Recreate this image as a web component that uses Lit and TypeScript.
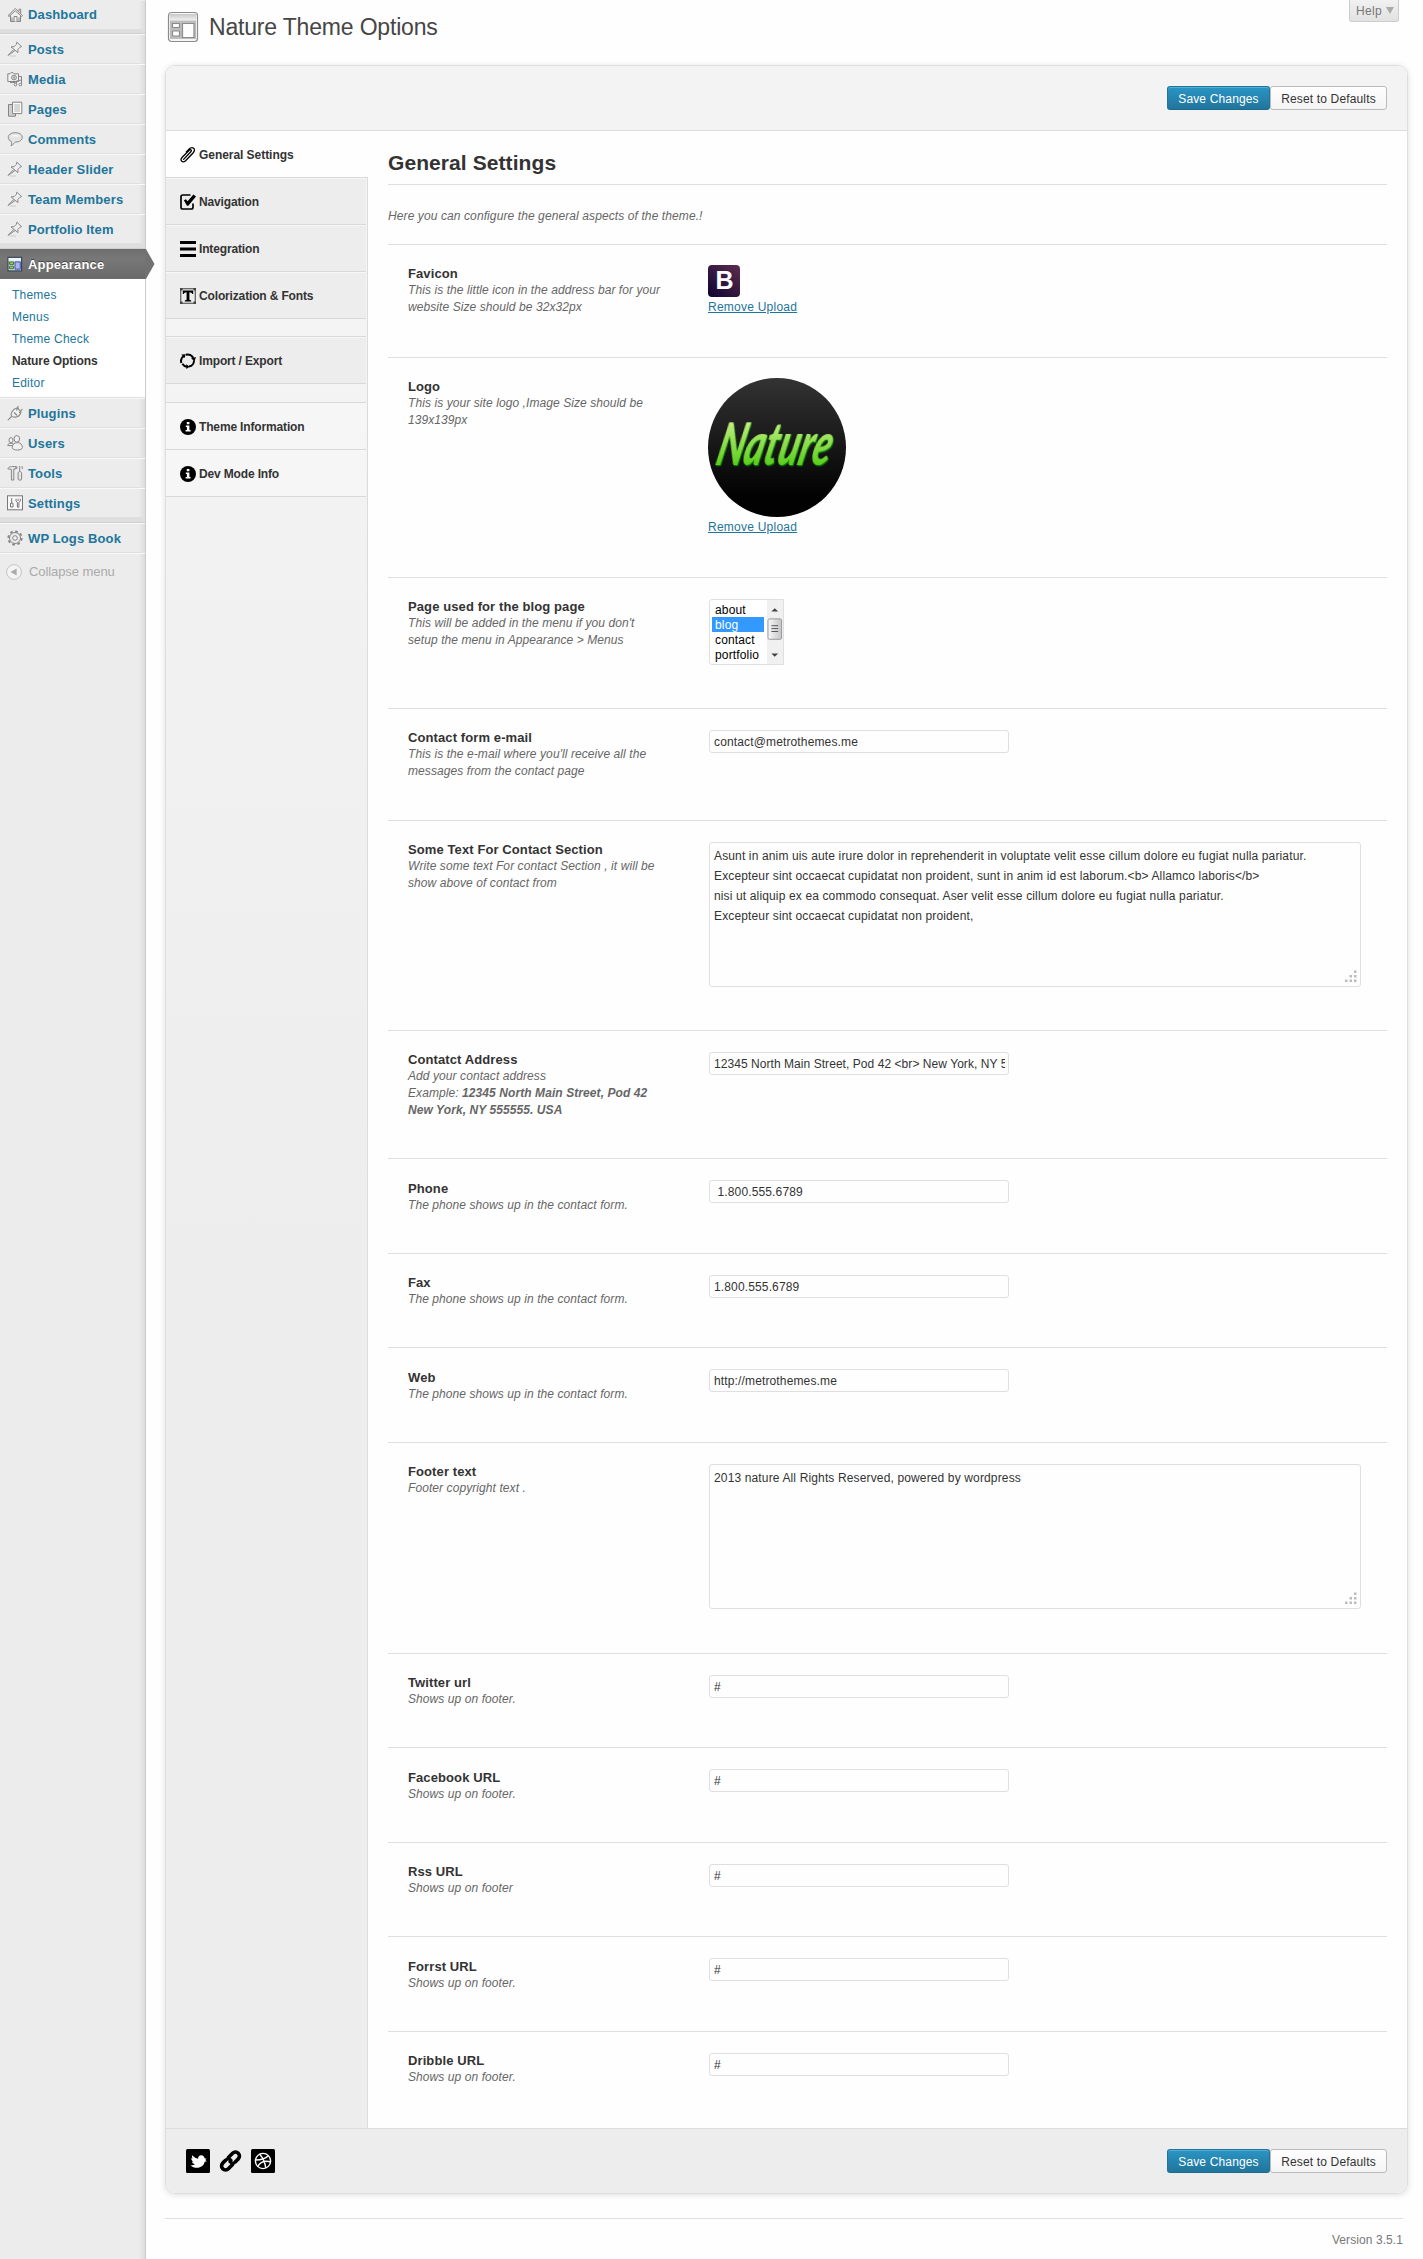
import { LitElement, html, svg, css, nothing, TemplateResult } from "lit";
import { customElement, property } from "lit/decorators.js";
import { classMap } from "lit/directives/class-map.js";

const pin = svg`<g fill="#efefef" stroke="#8a8a8a" stroke-width="1" stroke-linejoin="round"><path d="M9.8 1.2 14.6 5.6 13 6.2 10.8 8.4 11 11.6 4 5.9 7.2 5.6 9.3 3.4Z"/><path d="M6.8 8.4 1 14.4 8 9.6" fill="#ddd"/><path d="M2.500 15H9" stroke="#ccc" fill="none"/></g>`;

const menuIcons: Record<string, TemplateResult> = {
  home: svg`<g fill="#f1f1f1" stroke="#858585" stroke-width="1"><path d="M3.5 7.5V14.5H13.5V7.5"/><path d="M1 8.6 8.3 1.5 15.6 8.6 14.6 9.5 8.3 3.7 2 9.5Z"/><path d="M12 4.5V2.2H13.7V6"/><path d="M7 14.5V9.5H10V14.5M5 10.5V14M12 10.5V14"/></g>`,
  pin,
  media: svg`<g fill="#f1f1f1" stroke="#858585" stroke-width="1"><path d="M.8 2.8H3L4 1.6H6L7 2.8H11.5V10.5H.8Z"/><circle cx="7" cy="6.5" r="2.4"/><circle cx="7" cy="6.5" r=".8"/><path d="M12 5.5H14.5V14.5M3 11.5H8.5M9.5 13.5V10L14.5 9" fill="none"/><circle cx="8.4" cy="13.6" r="1.3"/><circle cx="13.3" cy="13.6" r="1.3"/></g>`,
  pages: svg`<g stroke="#858585" stroke-width="1"><path d="M1.5 3.5H8.5V15.2H1.5Z" fill="#cfcfcf"/><path d="M5.5 1.2H14.8V12.6H5.5Z" fill="#f8f8f8"/><path d="M7.3 4H13M7.3 6H13M7.3 8H13M7.3 10H13" stroke="#b5b5b5"/></g>`,
  comments: svg`<path d="M8.3 1.7C12.4 1.7 15.2 3.5 15.2 6.4 15.2 9.3 12.4 11 8.8 11 7.6 11.1 6.4 14 4 14.6 4.8 13.3 4.6 11.6 4.3 10.5 2.4 9.6 1.3 8.3 1.3 6.4 1.3 3.5 4.2 1.7 8.3 1.7Z" fill="#e4e4e4" stroke="#858585"/><path d="M3.5 5.6C4.8 3.3 11.8 3.3 13 5.6Z" fill="#f8f8f8"/>`,
  appearance: svg`<rect x="1" y="1.3" width="13.6" height="13.6" fill="#cfe6ee" stroke="#39465c" stroke-width="1.2"/><path d="M1.6 2H14V4.6H1.6Z" fill="#eef6fa"/><path d="M2.6 5.9H6.6V8.4H2.6ZM2.6 10.2H6.6V12.7H2.6Z" fill="#97d75c" stroke="#41612b" stroke-width=".9"/><path d="M8 5.9H13.3V13.2H8Z" fill="#a9b4f5" stroke="#3c4590" stroke-width=".9"/>`,
  plugins: svg`<g fill="#f1f1f1" stroke="#858585" stroke-width="1.1"><path d="M5 6.8C6.600 4 8.700 3.200 10.600 2.800L14 7.200C13.400 9.600 11.800 11.700 9 12 7 12.300 5.600 12 4.600 11.400 3.700 10 4 8.200 5 6.800Z"/><path d="M4.700 11.400.8 15.200M9.500 5.500 11.300.9M12.200 8 15.400 4M7 7.500 10.200 10.500" fill="none"/></g>`,
  users: svg`<g fill="#f1f1f1" stroke="#858585" stroke-width="1"><ellipse cx="4" cy="5.2" rx="2" ry="2.6"/><path d="M.7 10.5C.8 7.5 7 7.5 7.3 10.5Z"/><ellipse cx="9.8" cy="3.9" rx="2.8" ry="3.3"/><path d="M5.2 12.6C5.2 9 7.8 7.6 10.5 7.6 13.3 7.6 15.4 9.5 15.4 12.6 15.4 15.8 5.2 15.8 5.2 12.6Z"/></g>`,
  tools: svg`<g fill="#e6e6e6" stroke="#858585" stroke-width="1"><path d="M.8 3.8C2 1.4 4 1.3 8.9 1.6V3.9H6.8V15H4.4V4.4C3 4.2 1.8 4.3.8 3.8Z"/><path d="M12.7 1V6.5"/><path d="M11.1 8.2C11.1 6 14.6 6 14.6 8.2V14C14.6 15.6 11.1 15.6 11.1 14ZM9.8 4V1.2M15.2 4V1.2"/></g>`,
  settings: svg`<g fill="#f8f8f8" stroke="#777" stroke-width="1"><rect x=".5" y=".8" width="15" height="14"/><path d="M4.700 3.200V8M3.500 8.200V12H6V8.200Z"/><path d="M9 3.800V6.200L10.400 7.400V12.200H11.900V7.400L13.300 6.200V3.800M11.100 3.600V6" fill="none"/></g>`,
  gear: svg`<g fill="none" stroke="#858585" stroke-width="1"><circle cx="8" cy="8" r="6.700" stroke-width="1.800" stroke-dasharray="2.700 2.560"/><circle cx="8" cy="8" r="5.500" fill="#eaeaea"/><circle cx="8" cy="8" r="2.300" fill="#f4f4f4"/></g>`,
  collapse: svg`<circle cx="8" cy="8" r="7.4" fill="#f4f4f4" stroke="#c4c4c4"/><path d="M10.6 4.500V11.500L4.500 8Z" fill="#aaa"/>`,
};

const tabIcons: Record<string, TemplateResult> = {
  clip: svg`<path d="M3.600 12.400 10.800 4.800C12.300 3.200 10.700 1.800 9.200 3.300L2 10.500C-.6 13.600 2.800 16.400 5.600 13.700L13.200 5.700C16.600 1.900 12.400-1 9 2.100L6.300 4.900M6.300 13 12.600 6.500" fill="none" stroke="#000" stroke-width="1.300" stroke-linecap="round"/>`,
  check: svg`<path d="M13 9.5V13.2Q13 15 11.2 15H2.8Q1 15 1 13.2V2.8Q1 1 2.8 1H10.5" fill="none" stroke="#000" stroke-width="1.7"/><path d="M3.8 6.3 6 5.2 7.6 7.2 13.4.6 16 2.4 8.3 11.7H7Z"/>`,
  bars: svg`<path d="M0 0H16V3H0ZM0 6.4H16V9.4H0ZM0 13H16V16H0Z"/>`,
  type: svg`<rect x=".7" y=".7" width="14.600" height="14.600" fill="none" stroke="#666" stroke-width="1.300"/><path d="M0 0H2.500V2.500H0ZM13.500 0H16V2.500H13.500ZM0 13.500H2.500V16H0ZM13.500 13.500H16V16H13.500Z" fill="#444"/><path d="M2.800 2.600H13.200V6H12.400Q11.900 4.200 9.400 4.200V11.800L11.200 12.500V13.400H4.800V12.500L6.600 11.800V4.200Q4.100 4.200 3.600 6H2.800Z"/>`,
  cycle: svg`<g fill="none" stroke="#000" stroke-width="2"><path d="M1.4 10A6.2 6.2 0 0 1 4 2.8M5.8 1.8A6.2 6.2 0 0 1 13.3 5M14 7.2A6.2 6.2 0 0 1 9 13.6M6.9 13.8A6.2 6.2 0 0 1 2.4 10.8"/></g><path d="M1.3 1.6 5.600 1.200 4.700 5ZM11 5.400 16 3.900 14.600 8ZM6.200 11.200 9.600 13.800 6.400 16Z"/>`,
  info: svg`<circle cx="8" cy="8" r="8"/><path d="M6.8 3H9.4V5.2H6.8ZM5.8 6.4H9.4V11H10.6V12.6H5.6V11H6.9V8H5.8Z" fill="#fff"/>`,
};

interface MenuEntry { label: string; icon: string; gapAfter?: boolean; }
const menuTop: MenuEntry[] = [
  { label: "Dashboard", icon: "home", gapAfter: true },
  { label: "Posts", icon: "pin" },
  { label: "Media", icon: "media" },
  { label: "Pages", icon: "pages" },
  { label: "Comments", icon: "comments" },
  { label: "Header Slider", icon: "pin" },
  { label: "Team Members", icon: "pin" },
  { label: "Portfolio Item", icon: "pin", gapAfter: true },
];
const submenu = ["Themes", "Menus", "Theme Check", "Nature Options", "Editor"];
const menuBottom: MenuEntry[] = [
  { label: "Plugins", icon: "plugins" },
  { label: "Users", icon: "users" },
  { label: "Tools", icon: "tools" },
  { label: "Settings", icon: "settings", gapAfter: true },
  { label: "WP Logs Book", icon: "gear" },
];

@customElement("admin-menu")
class AdminMenu extends LitElement {
  static styles = css`
    :host { display: block; width: 145px; background: #ececec; border-right: 1px solid #ccc;
      box-shadow: inset -7px 0 6px -6px rgba(0,0,0,.12); font: 13px "Liberation Sans", Arial, sans-serif; }
    .item { box-sizing: border-box; height: 30px; display: flex; align-items: center; gap: 5px; padding: 0 0 0 7px;
      border-top: 1px solid #f9f9f9; border-bottom: 1px solid #dfdfdf; font-weight: bold; color: #21759b; letter-spacing: .13px; }
    .item:first-child { border-top-color: #ececec; padding-bottom: 1px; }
    .icon { width: 16px; height: 16px; flex: none; }
    .gap { box-sizing: border-box; height: 4px; background: #dedede; border-bottom: 1px solid #cfcfcf; }
    .gap.wide { height: 5px; }
    .current { position: relative; color: #fff; background: linear-gradient(#6f6f6f, #787878 30%, #6a6a6a); border-color: #6d6d6d; width: 146px;
      text-shadow: 0 -1px 0 #444; letter-spacing: .2px; }
    .arrow { position: absolute; left: 145px; top: -1px; width: 10px; height: 30px; fill: #727272; }
    .sub { background: #fff; border-bottom: 1px solid #dfdfdf; padding: 5px 0 3px 12px; display: flex; flex-direction: column; height: 110px; }
    .link { height: 22px; line-height: 22px; font-size: 12px; color: #21759b; letter-spacing: .22px; }
    .link.on { font-weight: bold; color: #333; letter-spacing: -.08px; }
    .collapse { display: flex; align-items: center; gap: 7px; height: 35px; padding-left: 6px; color: #aaa; border-top: 1px solid #f9f9f9; letter-spacing: -.08px; }
  `;
  private icon(name: string) {
    return html`<svg class="icon" viewBox="0 0 16 16">${menuIcons[name]}</svg>`;
  }
  private entry(e: MenuEntry) {
    return html`<div class="item">${this.icon(e.icon)}<span>${e.label}</span></div>
      ${e.gapAfter ? html`<div class=${classMap({ gap: true, wide: e.label !== "Dashboard" })}></div>` : nothing}`;
  }
  render() {
    return html`
      ${menuTop.map((e) => this.entry(e))}
      <div class="item current">${this.icon("appearance")}<span>Appearance</span>
        <svg class="arrow" viewBox="0 0 10 30"><path d="M0 0H1L9.500 15 1 30H0Z"/></svg></div>
      <div class="sub">${submenu.map((s) => html`<span class=${classMap({ link: true, on: s === "Nature Options" })}>${s}</span>`)}</div>
      ${menuBottom.map((e) => this.entry(e))}
      <div class="collapse">${this.icon("collapse")}<span>Collapse menu</span></div>`;
  }
}

@customElement("form-buttons")
class FormButtons extends LitElement {
  static styles = css`
    :host { display: flex; font: 12px "Liberation Sans", Arial, sans-serif; }
    .btn { box-sizing: border-box; height: 24px; line-height: 24px; border-radius: 3px; border: 1px solid; text-align: center; letter-spacing: .15px; white-space: nowrap; }
    .save { width: 103px; color: #fff; background: linear-gradient(#2a95c5, #21759b); border-color: #21759b #21759b #1e6a8d;
      box-shadow: inset 0 1px 0 rgba(120,200,230,.5); }
    .reset { width: 117px; color: #333; background: linear-gradient(#fefefe, #f4f4f4); border-color: #bbb; }
  `;
  render() {
    return html`<div class="btn save">Save Changes</div><div class="btn reset">Reset to Defaults</div>`;
  }
}

interface Tab { label: string; icon: string; kind?: string; gapAfter?: string; }
const tabs: Tab[] = [
  { label: "General Settings", icon: "clip", kind: "active" },
  { label: "Navigation", icon: "check" },
  { label: "Integration", icon: "bars" },
  { label: "Colorization & Fonts", icon: "type", gapAfter: "short" },
  { label: "Import / Export", icon: "cycle", gapAfter: "tall" },
  { label: "Theme Information", icon: "info", kind: "light" },
  { label: "Dev Mode Info", icon: "info", kind: "light" },
];

@customElement("option-tabs")
class OptionTabs extends LitElement {
  static styles = css`
    :host { display: block; box-sizing: border-box; width: 202px; background: linear-gradient(#f5f5f5, #ededed 1100px);
      font: bold 12px "Liberation Sans", Arial, sans-serif; letter-spacing: -.15px; color: #333; box-shadow: inset -1px 0 0 #dcdcdc; }
    .tab { box-sizing: border-box; height: 47px; width: 200px; display: flex; align-items: center; gap: 3px; padding: 1px 0 0 14px; background: #ededed;
      border-bottom: 1px solid #d8d8d8; border-top: 1px solid #f7f7f7; }
    .active { background: #fefefe; border-top-color: #fefefe; width: 202px; letter-spacing: -.05px; }
    .light { background: #f6f6f6; }
    .icon { width: 16px; height: 16px; flex: none; }
    .gap { box-sizing: border-box; width: 200px; border-bottom: 1px solid #d8d8d8; height: 18px; }
    .gap.tall { height: 19px; }
  `;
  render() {
    return tabs.map((t) => html`
      <div class=${classMap({ tab: true, [t.kind ?? "plain"]: true })}>
        <svg class="icon" viewBox="0 0 16 16">${tabIcons[t.icon]}</svg><span>${t.label}</span>
      </div>
      ${t.gapAfter ? html`<div class="gap ${t.gapAfter}"></div>` : nothing}`);
  }
}

@customElement("page-picker")
class PagePicker extends LitElement {
  static styles = css`
    :host { display: flex; box-sizing: border-box; width: 75px; height: 66px; border: 1px solid #dfdfdf; border-radius: 3px 0 0 3px; background: #fff;
      font: 12px "Liberation Sans", Arial, sans-serif; color: #000; }
    .list { width: 55px; padding: 2px 0 0 2px; margin-right: 2px; }
    .opt { width: 49px; height: 15px; line-height: 16px; padding-left: 3px; letter-spacing: .15px; }
    .opt.on { background: #39f; color: #fff; }
    .bar { width: 16px; height: 64px; background: #f0f0f0; }
  `;
  render() {
    return html`<div class="list">${["about", "blog", "contact", "portfolio"].map(
      (o) => html`<div class=${classMap({ opt: true, on: o === "blog" })}>${o}</div>`)}</div>
      <svg class="bar" viewBox="0 0 16 64"><defs><linearGradient id="t"><stop offset="0" stop-color="#f8f8f8"/><stop offset="1" stop-color="#c4c4c8"/></linearGradient></defs>
        <path d="M4.500 11 8 7.500 11.500 11ZM4.500 54 8 57.500 11.500 54Z" fill="#444"/>
        <rect x="1" y="18.500" width="14" height="21" rx="1.500" fill="url(#t)" stroke="#979797"/>
        <path d="M4.500 25.500H11.500M4.500 28.500H11.500M4.500 31.500H11.500" stroke="#555"/></svg>`;
  }
}

@customElement("text-box")
class TextBox extends LitElement {
  @property() value = "";
  @property({ type: Boolean }) area = false;
  @property({ type: Boolean }) dense = false;
  static styles = css`
    :host { display: block; position: relative; width: 300px; }
    :host([area]) { width: 652px; }
    .box { box-sizing: border-box; display: block; width: 100%; margin: 0; border: 1px solid #dfdfdf; border-radius: 3px; background: #fefefe; color: #333; outline: none;
      font: 12px "Liberation Sans", Arial, sans-serif; letter-spacing: .14px; }
    .line { height: 23px; padding: 2px 4px 1px; }
    .dense { letter-spacing: .055px; padding-right: 3px; }
    .area { height: 145px; padding: 3.4px 4px; line-height: 20px; resize: none; overflow: hidden; }
    .grip { position: absolute; right: 4px; bottom: 4px; width: 13px; height: 13px; fill: #bbb; }
  `;
  render() {
    return this.area
      ? html`<textarea class="box area" .value=${this.value}></textarea>
          <svg class="grip" viewBox="0 0 13 13"><path d="M10 .5h2.500v2.500h-2.500zM5.500 5h2.500v2.500h-2.500zM10 5h2.500v2.500h-2.500zM1 9.500h2.500v2.500h-2.500zM5.500 9.500h2.500v2.500h-2.500zM10 9.500h2.500v2.500h-2.500z"/></svg>`
      : html`<input class=${classMap({ box: true, line: true, dense: this.dense })} type="text" .value=${this.value} />`;
  }
}

const favicon = html`<svg class="favicon" viewBox="0 0 32 32"><defs><linearGradient id="f" x1="0" y1="1" x2=".8" y2="0"><stop offset="0" stop-color="#0c0330"/><stop offset="1" stop-color="#562a4c"/></linearGradient></defs>
  <rect width="32" height="32" rx="4" fill="url(#f)"/><text x="7.500" y="24" class="fav-letter">B</text></svg>`;

const logo = html`<svg class="logo" viewBox="0 0 138 139"><defs>
  <linearGradient id="d" x2="0" y2="1"><stop offset="0" stop-color="#333"/><stop offset=".85" stop-color="#020202"/></linearGradient>
  <linearGradient id="g" x2="0" y2="1"><stop offset=".2" stop-color="#c4ef83"/><stop offset=".8" stop-color="#5ccf1d"/></linearGradient></defs>
  <ellipse cx="69" cy="69.500" rx="69" ry="69.500" fill="url(#d)"/>
  <g transform="translate(6 87) skewX(-14) scale(1 1.240)">
  <text class="logo-word" textLength="114" lengthAdjust="spacingAndGlyphs" fill="url(#g)">Nature</text></g></svg>`;

const upload = (picture: TemplateResult) => html`<div class="upload">${picture}<span class="remove">Remove Upload</span></div>`;
const line = (value: string, dense = false) => html`<text-box .value=${value} ?dense=${dense}></text-box>`;
const area = (value: string) => html`<text-box area .value=${value}></text-box>`;

const contactText = `Asunt in anim uis aute irure dolor in reprehenderit in voluptate velit esse cillum dolore eu fugiat nulla pariatur.
Excepteur sint occaecat cupidatat non proident, sunt in anim id est laborum.<b> Allamco laboris</b>
nisi ut aliquip ex ea commodo consequat. Aser velit esse cillum dolore eu fugiat nulla pariatur.
Excepteur sint occaecat cupidatat non proident,`;

interface Field { title: string; hint: unknown; control: unknown; }
const fields: Field[] = [
  { title: "Favicon", hint: html`This is the little icon in the address bar for your<br>website Size should be 32x32px`, control: upload(favicon) },
  { title: "Logo", hint: html`This is your site logo ,Image Size should be<br>139x139px`, control: upload(logo) },
  { title: "Page used for the blog page", hint: html`This will be added in the menu if you don't<br>setup the menu in Appearance &gt; Menus`, control: html`<page-picker></page-picker>` },
  { title: "Contact form e-mail", hint: html`This is the e-mail where you'll receive all the<br>messages from the contact page`, control: line("contact@metrothemes.me") },
  { title: "Some Text For Contact Section", hint: html`Write some text For contact Section , it will be<br>show above of contact from`, control: area(contactText) },
  { title: "Contatct Address", hint: html`Add your contact address<br>Example: <b>12345 North Main Street, Pod 42<br>New York, NY 555555. USA</b>`, control: line("12345 North Main Street, Pod 42 <br> New York, NY 555555. USA", true) },
  { title: "Phone", hint: "The phone shows up in the contact form.", control: line(" 1.800.555.6789") },
  { title: "Fax", hint: "The phone shows up in the contact form.", control: line("1.800.555.6789") },
  { title: "Web", hint: "The phone shows up in the contact form.", control: line("http://metrothemes.me") },
  { title: "Footer text", hint: "Footer copyright text .", control: area("2013 nature All Rights Reserved, powered by wordpress") },
  { title: "Twitter url", hint: "Shows up on footer.", control: line("#") },
  { title: "Facebook URL", hint: "Shows up on footer.", control: line("#") },
  { title: "Rss URL", hint: "Shows up on footer", control: line("#") },
  { title: "Forrst URL", hint: "Shows up on footer.", control: line("#") },
  { title: "Dribble URL", hint: "Shows up on footer.", control: line("#") },
];

@customElement("settings-form")
class SettingsForm extends LitElement {
  static styles = css`
    :host { display: block; font: 12px "Liberation Sans", Arial, sans-serif; color: #333; }
    .heading { box-sizing: border-box; height: 54px; margin: 0; padding-top: 20px; font-size: 21px; line-height: 24px; letter-spacing: .08px; border-bottom: 1px solid #dfdfdf; }
    .intro { height: 59px; line-height: 62px; font-style: italic; color: #666; letter-spacing: .1px; }
    .rows { display: grid; grid-template-rows: 113px 220px 131px 112px 210px 128.4px 94.5px 94.5px 94.5px 211px 94.5px 94.5px 94.5px 94.5px 97.1px; }
    .row { display: grid; grid-template-columns: 301px 1fr; align-items: start; padding: 21px 0 0 20px; border-top: 1px solid #dfdfdf; }
    .label { margin-top: -.6px; }
    .title { font-size: 13px; font-weight: bold; line-height: 17px; letter-spacing: .1px; }
    .hint { line-height: 16.8px; font-style: italic; color: #666; letter-spacing: .08px; }
    .upload { display: flex; flex-direction: column; align-items: flex-start; margin: -1px 0 0 -1px; }
    .remove { color: #21759b; text-decoration: underline; line-height: 17px; margin-top: 2px; letter-spacing: .24px; }
    .favicon { width: 32px; height: 32px; }
    .fav-letter { font: bold 25px "Liberation Sans", Arial, sans-serif; fill: #fff; }
    .logo { width: 138px; height: 139px; overflow: visible; }
    .logo-word { font: italic 900 48px Lato, "Liberation Sans", sans-serif; filter: drop-shadow(1.5px 1.5px 0 #0c7a0c); }
  `;
  render() {
    return html`<h3 class="heading">General Settings</h3>
      <div class="intro">Here you can configure the general aspects of the theme.!</div>
      <div class="rows">${fields.map((f) => html`<div class="row">
        <div class="label"><div class="title">${f.title}</div><div class="hint">${f.hint}</div></div>
        <div>${f.control}</div></div>`)}</div>`;
  }
}

@customElement("app-root")
class AppRoot extends LitElement {
  static styles = css`
    :host { display: flex; height: 2259px; background: #fefefe; font: 12px "Liberation Sans", Arial, sans-serif; color: #333; overflow: hidden; }
    .main { flex: 1; padding: 0 15px 0 19px; display: flex; flex-direction: column; }
    .top { display: flex; align-items: flex-start; height: 65px; flex: none; }
    .screen { width: 32px; height: 32px; margin: 11px 10px 0 2px; }
    .name { margin: 12px 0 0; font-size: 23px; font-weight: normal; line-height: 30px; color: #464646; flex: 1; letter-spacing: -.18px; }
    .help { box-sizing: border-box; width: 50px; height: 22px; margin-right: 9px; padding: 0 4px 0 6px; display: flex; align-items: center; justify-content: space-between; border: 1px solid #ccc;
      border-top: 0; border-radius: 0 0 3px 3px; background: linear-gradient(#f1f1f1, #e2e2e2); color: #777; letter-spacing: .3px; }
    .tri { width: 8px; height: 7px; fill: #aaa; }
    .panel { box-sizing: border-box; height: 2129px; flex: none; width: 1243px; border: 1px solid #dedede; border-radius: 10px; overflow: hidden; box-shadow: 0 1px 6px rgba(0,0,0,.13); display: flex; flex-direction: column; }
    .bar { box-sizing: border-box; height: 65px; display: flex; align-items: center; padding: 0 20px; background: #f3f3f3; border-bottom: 1px solid #dcdcdc; flex: none; }
    .bar.low { background: #ededed; border-bottom: 0; border-top: 1px solid #dcdcdc; }
    .push { margin-left: auto; }
    .body { flex: 1; min-height: 0; display: flex; }
    .form { flex: 1; padding: 0 20px; }
    .social { display: flex; align-items: center; gap: 9px; }
    .soc { width: 24px; height: 24px; }
    .soc.chain { width: 23px; }
    .foot { flex: none; margin-top: 24px; width: 1238px; border-top: 1px solid #dfdfdf; text-align: right; color: #777; line-height: 42px; height: 40px; letter-spacing: .08px; }
  `;
  render() {
    return html`<admin-menu></admin-menu>
      <div class="main">
        <div class="top">
          <svg class="screen" viewBox="0 0 32 32"><defs><linearGradient id="s" x2="0" y2="1"><stop offset="0" stop-color="#c8c8c8"/><stop offset="1" stop-color="#eee"/></linearGradient></defs>
            <rect x="1.500" y="1.500" width="29" height="29" rx="3" fill="#f6f6f6" stroke="#8c8c8c" stroke-width="1.200"/>
            <rect x="2.800" y="3" width="26.400" height="6" fill="url(#s)"/><path d="M3 9.500H29V28H3Z" fill="#bdbdbd"/>
            <path d="M5.500 12.500H12.500V16.500H5.500ZM5.500 20H12.500V25H5.500ZM15.500 12.500H27V26.500H15.500Z" fill="#fdfdfd" stroke="#8c8c8c" stroke-width="1.200"/></svg>
          <h2 class="name">Nature Theme Options</h2>
          <div class="help"><span>Help</span><svg class="tri" viewBox="0 0 8 7"><path d="M0 0H8L4 7Z"/></svg></div>
        </div>
        <div class="panel">
          <div class="bar"><form-buttons class="push"></form-buttons></div>
          <div class="body"><option-tabs></option-tabs><settings-form class="form"></settings-form></div>
          <div class="bar low">
            <div class="social">
              <svg class="soc" viewBox="0 0 24 24"><rect width="24" height="24" rx="1.500"/><path d="M20.800 12.300 18.700 12.800C18 16.500 14.800 18.800 11 18.800 8.600 18.800 6.300 17.900 4.500 16.400 6.400 16.500 7.700 16.200 8.900 15.300 7.200 14.900 6.300 14.100 6 12.800L7.400 12.700C5.800 11.800 5.200 10.600 5.400 9L6.900 9.600C5.800 8.600 5.700 7.500 6.200 6.300 7.900 8.300 9.700 9.300 12.100 9.700 12 7.700 13.300 6.300 15.300 6.200 17 6.200 18.400 7.500 18.700 9.400L20.600 9.600 19.300 11Z" fill="#fff"/></svg>
              <svg class="soc chain" viewBox="0 0 23 24"><g fill="none" stroke="#000" stroke-width="3.600" stroke-linecap="round" transform="rotate(-45 11.500 12)"><path d="M12.500 8H18.500A4 4 0 0 1 18.500 16H14.500M10.500 16H4.500A4 4 0 0 1 4.500 8H8.500" /><path d="M8.500 8Q12.500 8 12.500 12M14.500 16Q10.500 16 10.500 12" stroke-width="3"/></g></svg>
              <svg class="soc" viewBox="0 0 24 24"><rect width="24" height="24" rx="1.500"/><g fill="none" stroke="#fff" stroke-width="1.400"><circle cx="12" cy="12" r="7.600"/><path d="M8.800 5.300C12 9 14 13.500 14.800 19M4.500 11C9 11 14 10.300 17.200 6.800M6.800 17.500C9 13 14 11.500 19.500 12.700"/></g></svg>
            </div>
            <form-buttons class="push"></form-buttons>
          </div>
        </div>
        <div class="foot">Version 3.5.1</div>
      </div>`;
  }
}
